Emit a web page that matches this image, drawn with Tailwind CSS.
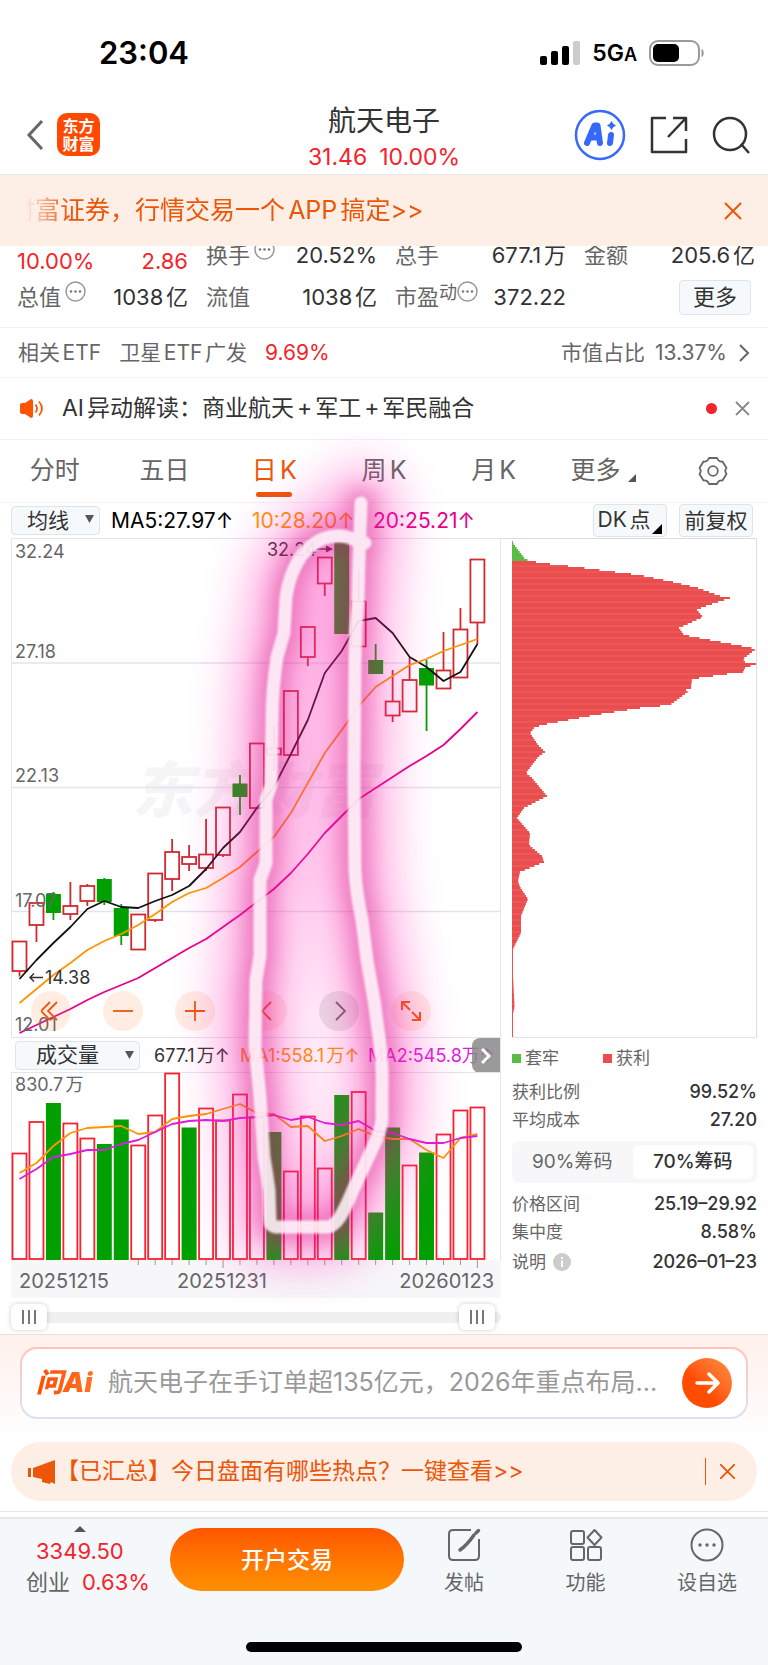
<!DOCTYPE html>
<html lang="zh-CN">
<head>
<meta charset="utf-8">
<meta name="viewport" content="width=device-width, initial-scale=1">
<title>航天电子</title>
<script src="https://cdn.jsdelivr.net/npm/@tailwindcss/browser@4"></script>
</head>
<body class="bg-white font-[Inter,'Noto_Sans_CJK_SC',sans-serif] text-[#333] [text-autospace:normal]">

<!-- Status bar -->
<div class="flex h-[88px] items-center justify-between pt-[18px] pr-[63px] pl-[99px]">
  <div class="text-[31px] leading-9 font-semibold text-black">23:04</div>
  <div class="flex items-center gap-3">
    <svg class="h-6 w-10" viewBox="0 0 40 24" fill="#000"><rect x="0" y="15" width="7" height="9" rx="2"/><rect x="11" y="10" width="7" height="14" rx="2"/><rect x="22" y="5" width="7" height="19" rx="2"/><rect x="33" y="0" width="7" height="24" rx="2" fill="#ccc"/></svg>
    <div class="text-[23px] leading-7 font-semibold text-black">5G<span class="text-lg leading-5">A</span></div>
    <svg class="h-[26px] w-[56px]" viewBox="0 0 56 26"><rect x="1" y="1" width="49" height="24" rx="8" fill="none" stroke="#9a9a9a" stroke-width="2"/><rect x="4" y="4" width="26" height="18" rx="5"/><path d="M52.500 9c3 1 3 7 0 8z" fill="#9a9a9a"/></svg>
  </div>
</div>

<!-- Title bar -->
<header class="grid h-[87px] grid-cols-[1fr_auto_1fr] items-center border-b border-[#e6e6e6] px-[18px] pt-[7px]">
  <div class="flex items-center gap-[13px]">
    <button type="button" aria-label="返回" class="pl-2"><svg class="h-8 w-[18px]" viewBox="0 0 18 32" fill="none" stroke="#666" stroke-width="3"><path d="M16 2 3 16l13 14"/></svg></button>
    <a href="#" class="flex size-[43px] flex-col items-center justify-center rounded-[10px] bg-[#ff4800] text-[16px] leading-[18px] font-bold text-white"><span>东方</span><span>财富</span></a>
  </div>
  <div class="pt-1 text-center">
    <h1 class="text-[28px] leading-10">航天电子</h1>
    <div class="flex justify-center gap-3 text-[23px] leading-8 text-[#f5232b]"><span>31.46</span><span>10.00%</span></div>
  </div>
  <div class="flex items-center justify-end gap-6">
    <button type="button" aria-label="AI"><svg class="size-[52px]" viewBox="0 0 52 52"><circle cx="26" cy="26" r="24" fill="#fff" stroke="#3668fb" stroke-width="2.500"/><g fill="none" stroke="#3668fb" stroke-linejoin="round" stroke-linecap="round"><path d="M13 34 20.500 16.500h3L26 34M17 28.500h8" stroke-width="6"/><path d="M37 26 36 34" stroke-width="6"/></g><path d="m37.500 12 1.800 2.700 2.700 1.800-2.700 1.800-1.800 2.700-1.800-2.700-2.700-1.800 2.700-1.800z" fill="#3668fb"/></svg></button>
    <button type="button" aria-label="分享"><svg class="size-[38px]" viewBox="0 0 38 38" fill="none" stroke="#333" stroke-width="2.500" stroke-linejoin="round"><path d="M16 2H2v34h34V23M23 2h13v13M36 2 18 21"/></svg></button>
    <button type="button" aria-label="搜索"><svg class="size-[38px]" viewBox="0 0 38 38" fill="none" stroke="#333" stroke-width="2.500"><circle cx="18" cy="18" r="16"/><path d="m29 28 8 9"/></svg></button>
  </div>
</header>

<!-- Broker promotion -->
<div class="flex h-[71px] items-center justify-between bg-[#fdeee6] pr-[26px] pl-[26px] text-2xl text-[#ec5609]">
  <a href="#" class="flex h-9 items-center overflow-hidden whitespace-nowrap [mask-image:linear-gradient(to_right,transparent,#000_42px)]"><span class="-ml-4 text-[25px]">财富证券，行情交易一个APP搞定&gt;&gt;</span></a>
  <button type="button" aria-label="关闭"><svg class="size-[18px]" viewBox="0 0 18 18" stroke="#ec5609" stroke-width="2"><path d="m1 1 16 16M17 1 1 17"/></svg></button>
</div>

<!-- Key figures -->
<section class="overflow-hidden border-b border-[#f2f2f4]">
  <div class="-mt-3 grid grid-cols-4 gap-x-[18px] pr-[13px] pb-[9px] pl-[17px] text-[22px] whitespace-nowrap *:flex *:h-[42px] *:items-center *:justify-between">
    <div class="pt-3 text-[#f5232b]"><span>10.00%</span><span>2.86</span></div>
    <div><span class="flex gap-1 text-[#666]">换手<svg class="size-[21px]" viewBox="0 0 21 21"><circle cx="10.500" cy="10.500" r="9.500" fill="none" stroke="#999" stroke-width="1.500"/><g fill="#777"><circle cx="6" cy="10.500" r="1.300"/><circle cx="10.500" cy="10.500" r="1.300"/><circle cx="15" cy="10.500" r="1.300"/></g></svg></span><span>20.52%</span></div>
    <div><span class="text-[#666]">总手</span><span>677.1万</span></div>
    <div><span class="text-[#666]">金额</span><span>205.6亿</span></div>
    <div><span class="flex gap-1 text-[#666]">总值<svg class="size-[21px]" viewBox="0 0 21 21"><circle cx="10.500" cy="10.500" r="9.500" fill="none" stroke="#999" stroke-width="1.500"/><g fill="#777"><circle cx="6" cy="10.500" r="1.300"/><circle cx="10.500" cy="10.500" r="1.300"/><circle cx="15" cy="10.500" r="1.300"/></g></svg></span><span>1038亿</span></div>
    <div><span class="text-[#666]">流值</span><span>1038亿</span></div>
    <div><span class="flex text-[#666]">市盈<span class="text-[18px] leading-6">动</span><svg class="size-[21px]" viewBox="0 0 21 21"><circle cx="10.500" cy="10.500" r="9.500" fill="none" stroke="#999" stroke-width="1.500"/><g fill="#777"><circle cx="6" cy="10.500" r="1.300"/><circle cx="10.500" cy="10.500" r="1.300"/><circle cx="15" cy="10.500" r="1.300"/></g></svg></span><span>372.22</span></div>
    <div><button type="button" class="mr-1 ml-auto h-[35px] w-[72px] rounded border border-[#dfe4e8] bg-[#f5f9fb] leading-8">更多</button></div>
  </div>
</section>

<a href="#" class="flex h-[50px] items-center border-b border-[#f2f2f4] px-[18px] text-[21px] text-[#666]">
  <span>相关ETF</span><span class="ml-[18px]">卫星ETF广发</span><span class="ml-[18px] text-[#f5232b]">9.69%</span>
  <span class="ml-auto">市值占比</span><span class="ml-[10px]">13.37%</span>
  <svg class="ml-3 h-[18px] w-[11px]" viewBox="0 0 11 18" fill="none" stroke="#666" stroke-width="2"><path d="m1 1 8 8-8 8"/></svg>
</a>

<div class="flex h-[62px] items-center border-b border-[#f2f2f4] pr-[18px] pl-5 text-[22px]">
  <svg class="h-[19px] w-6" viewBox="0 0 24 19"><path d="M0 6q0-2 2-2h3l6-4q2 0 2 2v15q0 2-2 2l-6-4H2q-2 0-2-2z" fill="#ff5500"/><path d="M15.500 5.500q3 4 0 8M19 2.500q6 7 0 14" fill="none" stroke="#ff5500" stroke-width="1.800"/></svg>
  <a href="#" class="ml-[18px] text-[23px]">AI异动解读：商业航天<span class="mx-[3px]">+</span>军工<span class="mx-[3px]">+</span>军民融合</a>
  <span class="mr-[18px] ml-auto size-[11px] rounded-full bg-[#f5232b]"></span>
  <button type="button" aria-label="关闭"><svg class="size-[15px]" viewBox="0 0 15 15" stroke="#888" stroke-width="1.800"><path d="m1 1 13 13M14 1 1 14"/></svg></button>
</div>

<main class="relative">
  <!-- Period tabs -->
  <nav class="grid h-[63px] grid-cols-7 place-items-center border-b border-[#f2f2f4] text-[25px] text-[#666]">
    <button type="button">分时</button>
    <button type="button">五日</button>
    <button type="button" class="relative text-[#ec5609]">日K<span class="absolute bottom-[-7px] left-1/2 h-[5px] w-9 -translate-x-1/2 rounded-full bg-[#ec5609]"></span></button>
    <button type="button">周K</button>
    <button type="button">月K</button>
    <button type="button" class="flex items-end gap-2">更多<svg class="mb-2 size-2" viewBox="0 0 8 8" fill="#555"><path d="M8 0v8H0z"/></svg></button>
    <button type="button" aria-label="设置"><svg class="size-[30px]" viewBox="0 0 30 30" fill="none" stroke="#666" stroke-width="1.800" stroke-linejoin="round"><path d="M11 2h8q1.500 4 5.500 3.500L28.500 12q-2.500 3 0 6l-4 6.500Q20.500 24 19 28h-8q-1.500-4-5.500-3.500L1.500 18q2.500-3 0-6l4-6.500Q9.500 6 11 2z"/><circle cx="15" cy="15" r="4.800"/></svg></button>
  </nav>

  <!-- Moving averages -->
  <div class="flex h-[35px] items-center pr-[15px] pl-[11px] text-[21px] whitespace-nowrap">
    <div class="relative"><select aria-label="均线" class="h-[29px] w-[89px] appearance-none rounded border border-[#dfe4e8] bg-[#f5f9fb] pl-[15px] leading-6"><option>均线</option></select><svg class="pointer-events-none absolute top-[10px] right-[6px] h-2 w-[9px]" viewBox="0 0 9 8" fill="#555"><path d="M0 0h9L4.500 8z"/></svg></div>
    <span class="ml-[11px] w-[141px] text-black">MA5:27.97↑</span>
    <span class="w-[121px] text-[#ff9500]">10:28.20↑</span>
    <span class="text-[#e6008c]">20:25.21↑</span>
    <button type="button" class="ml-auto flex h-[33px] w-[74px] items-end justify-center rounded border border-[#dfe4e8] bg-[#f5f9fb] leading-8">DK点<svg class="mb-[2px] ml-[2px] size-[10px]" viewBox="0 0 10 10"><path d="M10 0v10H0z"/></svg></button>
    <button type="button" class="ml-3 h-[33px] w-[74px] rounded border border-[#dfe4e8] bg-[#f5f9fb] leading-8">前复权</button>
  </div>

  <div class="grid grid-cols-[490fr_256fr] px-[11px]">
    <div>
      <div class="relative">
        <svg id="kline" class="block h-auto w-full font-[Inter,'Noto_Sans_CJK_SC',sans-serif]" viewBox="11 538 490 499"></svg>
        <div class="absolute bottom-[6px] left-5 flex gap-8 *:flex *:size-10 *:items-center *:justify-center *:rounded-full *:bg-[#ff6a1a]/12">
          <button type="button" aria-label="最早"><svg class="size-5" viewBox="0 0 20 20" fill="none" stroke="#f0560c" stroke-width="1.800"><path d="M9 1 0 10l9 9M16 1l-9 9 9 9"/></svg></button>
          <button type="button" aria-label="缩小"><svg class="size-5" viewBox="0 0 20 20" stroke="#f0560c" stroke-width="1.800"><path d="M0 10h20"/></svg></button>
          <button type="button" aria-label="放大"><svg class="size-5" viewBox="0 0 20 20" stroke="#f0560c" stroke-width="1.800"><path d="M0 10h20M10 0v20"/></svg></button>
          <button type="button" aria-label="向前"><svg class="size-5" viewBox="0 0 20 20" fill="none" stroke="#f0560c" stroke-width="1.800"><path d="m14 1-9 9 9 9"/></svg></button>
          <button type="button" aria-label="向后" class="!bg-[#888]/20"><svg class="size-5" viewBox="0 0 20 20" fill="none" stroke="#666" stroke-width="1.800"><path d="m7 1 9 9-9 9"/></svg></button>
          <button type="button" aria-label="全屏"><svg class="size-5" viewBox="0 0 20 20" fill="none" stroke="#f0560c" stroke-width="2"><path d="M1 9V1h8M1 1l8 8M19 11v8h-8M19 19l-8-8"/></svg></button>
        </div>
      </div>
      <!-- Volume header -->
      <div class="relative flex h-[35px] items-center overflow-hidden border-t border-r border-[#e4e4ea] pl-1 text-[18px] whitespace-nowrap">
        <div class="relative"><select aria-label="成交量" class="h-[29px] w-[125px] appearance-none rounded border border-[#dfe4e8] bg-[#f5f9fb] pl-[20px] text-[21px] leading-6"><option>成交量</option></select><svg class="pointer-events-none absolute top-[10px] right-[6px] h-2 w-[9px]" viewBox="0 0 9 8" fill="#555"><path d="M0 0h9L4.500 8z"/></svg></div>
        <span class="ml-[14px] w-[86px]">677.1万↑</span>
        <span class="w-[128px] text-[#ff9500]">MA1:558.1万↑</span>
        <span class="text-[#dd1cdd] [text-autospace:no-autospace]">MA2:545.8万↑</span>
        <button type="button" aria-label="更多指标" class="absolute top-0 right-0 flex h-[35px] w-7 items-center justify-center rounded-l-lg bg-[#888]/85"><svg class="h-4 w-[10px]" viewBox="0 0 10 16" fill="none" stroke="#fff" stroke-width="3"><path d="m1 1 7 7-7 7"/></svg></button>
      </div>
      <svg id="volume" class="block h-auto w-full font-[Inter,'Noto_Sans_CJK_SC',sans-serif]" viewBox="11 1072 490 226"></svg>
      <!-- Date range -->
      <div class="relative h-9">
        <div class="absolute inset-x-0 top-[14px] h-[11px] rounded-full bg-[#f0f0f3]"></div>
        <input type="range" aria-label="开始日期" min="0" max="100" value="0" class="pointer-events-none absolute top-[6px] left-0 h-[26px] w-[484px] max-w-full appearance-none bg-transparent [&::-webkit-slider-thumb]:pointer-events-auto [&::-webkit-slider-thumb]:h-[26px] [&::-webkit-slider-thumb]:w-9 [&::-webkit-slider-thumb]:appearance-none [&::-webkit-slider-thumb]:rounded-md [&::-webkit-slider-thumb]:bg-white [&::-webkit-slider-thumb]:bg-[linear-gradient(90deg,#777_2px,transparent_2px,transparent_6px,#777_6px,#777_8px,transparent_8px,transparent_12px,#777_12px)] [&::-webkit-slider-thumb]:bg-[length:14px_14px] [&::-webkit-slider-thumb]:bg-center [&::-webkit-slider-thumb]:bg-no-repeat [&::-webkit-slider-thumb]:shadow-[0_0_5px_rgba(0,0,0,.2)]">
        <input type="range" aria-label="结束日期" min="0" max="100" value="100" class="pointer-events-none absolute top-[6px] left-0 h-[26px] w-[484px] max-w-full appearance-none bg-transparent [&::-webkit-slider-thumb]:pointer-events-auto [&::-webkit-slider-thumb]:h-[26px] [&::-webkit-slider-thumb]:w-9 [&::-webkit-slider-thumb]:appearance-none [&::-webkit-slider-thumb]:rounded-md [&::-webkit-slider-thumb]:bg-white [&::-webkit-slider-thumb]:bg-[linear-gradient(90deg,#777_2px,transparent_2px,transparent_6px,#777_6px,#777_8px,transparent_8px,transparent_12px,#777_12px)] [&::-webkit-slider-thumb]:bg-[length:14px_14px] [&::-webkit-slider-thumb]:bg-center [&::-webkit-slider-thumb]:bg-no-repeat [&::-webkit-slider-thumb]:shadow-[0_0_5px_rgba(0,0,0,.2)]">
      </div>
    </div>

    <!-- Cost distribution -->
    <div>
      <svg id="chips" class="block h-auto w-full" viewBox="501 538 256 499"></svg>
      <div class="pl-[11px] text-[17px] leading-7 text-[#666]">
        <div class="flex h-[41px] items-center border-t border-[#e4e4ea]">
          <span class="mr-1 size-[9px] bg-[#5cba47]"></span><span class="w-[78px]">套牢</span><span class="mr-1 size-[9px] bg-[#ea4d4d]"></span><span>获利</span>
        </div>
        <div class="flex justify-between"><span>获利比例</span><span class="text-[18px] font-medium text-[#333]">99.52%</span></div>
        <div class="flex justify-between"><span>平均成本</span><span class="text-[18px] font-medium text-[#333]">27.20</span></div>
        <div class="my-[7px] flex h-[42px] rounded-lg bg-[#f7f7fa] p-1 pl-0 text-[19px] [text-autospace:no-autospace]">
          <button type="button" class="flex-1">90%筹码</button><button type="button" class="flex-1 rounded-md bg-white font-medium text-[#333]">70%筹码</button>
        </div>
        <div class="flex justify-between"><span>价格区间</span><span class="text-[18px] font-medium text-[#333]">25.19–29.92</span></div>
        <div class="flex justify-between"><span>集中度</span><span class="text-[18px] font-medium text-[#333]">8.58%</span></div>
        <div class="mt-[2px] flex justify-between"><span class="flex items-center gap-[7px]">说明<svg class="size-[18px]" viewBox="0 0 18 18"><circle cx="9" cy="9" r="9" fill="#ccc"/><path d="M9 7.500V14M9 4v2" stroke="#fff" stroke-width="2"/></svg></span><span class="text-[18px] font-medium text-[#333]">2026–01–23</span></div>
      </div>
    </div>
  </div>

  <!-- Hand-drawn marker over the chart -->
  <svg class="pointer-events-none absolute top-0 left-0 w-full overflow-visible" viewBox="0 440 768 895" fill="none" stroke-linecap="round" stroke-linejoin="round">
    <defs>
      <filter id="wide" filterUnits="userSpaceOnUse" x="100" y="380" width="450" height="980"><feGaussianBlur stdDeviation="23"/></filter>
      <filter id="near" filterUnits="userSpaceOnUse" x="100" y="380" width="450" height="980"><feGaussianBlur stdDeviation="10"/></filter>
      <filter id="soft" filterUnits="userSpaceOnUse" x="100" y="380" width="450" height="980"><feGaussianBlur stdDeviation="1"/></filter>
      <path id="mark" d="M361 503 359 560 358 600Q355 630 355 660L354 780 355 870Q356 892 362 920L367 960 374 1000 379 1037Q383 1065 382 1090L382 1120Q380 1133 373 1147L353 1190Q346 1207 340 1217 333 1227 328 1227L276 1227Q270 1226 270 1221L269 1190Q267 1175 264 1157L260 1097 255 1045 256 980 260 956 260 880 266 863 266 800 271 785 272 723Q272 690 277 657L284 633 286 597Q289 575 301 556 310 545 322 539 335 534 347 537L365 543"/>
    </defs>
    <g filter="url(#wide)" opacity=".38"><use href="#mark" stroke="#ff28b4" stroke-width="74"/></g>
    <g filter="url(#near)" opacity=".32"><use href="#mark" stroke="#c8006e" stroke-width="30"/></g>
    <g filter="url(#soft)" opacity=".88"><use href="#mark" stroke="#fff5fb" stroke-width="13"/></g>
  </svg>
</main>

<!-- Ask AI -->
<section class="border-t border-[#e4e4e6] bg-linear-to-b from-[#fff0eb] to-white px-5 pt-3 pb-[23px]">
  <div class="rounded-[17px] bg-linear-to-b from-[#ffc2b8] to-[#d8e2f6] p-[2px]">
    <form class="flex h-[68px] items-center rounded-[15px] bg-white px-[14px]" onsubmit="return false">
      <label for="ask" class="w-[72px] bg-linear-to-r from-[#ff4c00] to-[#ff7a2a] bg-clip-text text-[27px] leading-9 font-black whitespace-nowrap text-transparent italic [text-autospace:no-autospace]">问Ai</label>
      <input id="ask" type="text" placeholder="航天电子在手订单超135亿元，2026年重点布局..." class="min-w-0 flex-1 text-[25px] outline-none [text-autospace:no-autospace] placeholder:text-[#999]">
      <button type="submit" aria-label="发送" class="flex size-[50px] items-center justify-center rounded-full bg-linear-to-tr from-[#ff4d00] from-40% to-[#ff9040]"><svg class="h-[22px] w-[25px]" viewBox="0 0 25 22" fill="none" stroke="#fff" stroke-width="3.500" stroke-linecap="round" stroke-linejoin="round"><path d="M2 11h20M14 2l9 9-9 9"/></svg></button>
    </form>
  </div>
</section>

<div class="mx-[11px] flex h-[59px] items-center rounded-full bg-[#fdeee6] pr-[22px] pl-[17px] text-[23px] text-[#ec5609]">
  <svg class="h-6 w-7" viewBox="0 0 28 24" fill="#ec5609"><path d="M0 8h3v9H0zM5 8 27 0v24l-4-2-1 2-8-2v-3l-9-2z"/></svg>
  <a href="#" class="whitespace-nowrap">【已汇总】今日盘面有哪些热点？一键查看&gt;&gt;</a>
  <span class="mr-[14px] ml-auto h-[27px] w-px bg-[#ec5609]"></span>
  <button type="button" aria-label="关闭"><svg class="size-[15px]" viewBox="0 0 15 15" stroke="#ec5609" stroke-width="1.800"><path d="m0 0 15 15M15 0 0 15"/></svg></button>
</div>
<div class="mt-[10px] h-[6px] border-t border-[#e8e8ea]"></div>

<!-- Bottom bar -->
<footer class="border-t-2 border-[#e6e9eb] bg-[#f5f8fa]">
  <div class="flex h-[82px] items-start pr-[30px] pl-[26px] text-[20px] leading-7 text-[#666]">
    <a href="#" class="w-[144px] pt-[7px] text-[22px] leading-[31px]">
      <svg class="ml-[48px] block h-[6px] w-3" viewBox="0 0 12 6" fill="#555"><path d="M6 0l6 6H0z"/></svg>
      <span class="mt-1 block pl-[10px] text-[#f5232b]">3349.50</span>
      <span class="flex gap-3">创业<span class="text-[#f5232b]">0.63%</span></span>
    </a>
    <button type="button" class="mt-[9px] h-[63px] w-[234px] rounded-full bg-linear-to-b from-[#ff5500] to-[#ff9000] text-[23px] font-medium text-white">开户交易</button>
    <div class="flex flex-1 justify-between pt-[9px] pl-[29px] *:flex *:w-[62px] *:flex-col *:items-center *:gap-[7px] *:whitespace-nowrap">
      <button type="button"><svg class="size-[34px]" viewBox="0 0 34 34" fill="none" stroke="#666" stroke-width="2"><path d="M24 2H6Q2 2 2 6v22q0 4 4 4h22q4 0 4-4V11"/><path d="M13 22q7-5 14-15M29 5l2.500-2.500" stroke-width="3.500" stroke-linecap="round"/></svg>发帖</button>
      <button type="button"><svg class="size-[34px]" viewBox="0 0 34 34" fill="none" stroke="#666" stroke-width="2" stroke-linejoin="round"><rect x="2" y="3" width="13" height="13" rx="2"/><rect x="2" y="19" width="13" height="13" rx="2"/><rect x="19" y="19" width="13" height="13" rx="2"/><path d="m25.500 2 7 7.500-7 7.500-7-7.500z"/></svg>功能</button>
      <button type="button"><svg class="size-[34px]" viewBox="0 0 34 34"><circle cx="17" cy="17" r="15.500" fill="none" stroke="#666" stroke-width="2"/><g fill="#666"><circle cx="10" cy="17" r="1.700"/><circle cx="17" cy="17" r="1.700"/><circle cx="24" cy="17" r="1.700"/></g></svg>设自选</button>
    </div>
  </div>
  <div class="flex h-[65px] items-end justify-center pb-[14px]"><div class="h-[10px] w-[276px] rounded-full bg-black"></div></div>
</footer>

<script>
const cx = i => 19.5 + i * 16.96;
const line = (ys, color) => `<polyline points="${ys.map((y, i) => cx(i).toFixed(1) + ',' + y).join(' ')}" fill="none" stroke="${color}" stroke-width="1.800" stroke-linejoin="round"/>`;
const text = (x, y, s, size, fill, extra = '') => `<text x="${x}" y="${y}" font-size="${size}" fill="${fill}" ${extra}>${s}</text>`;

// Candles: [type, body top, body bottom, high, low]
const candles = [
  ['r',941.5,971,941.5,976.5],['r',903,925,903,942],['g',894,913,892,920],['r',906,914,882,920],['r',886,901,884,906],
  ['g',879,902,878,905],['g',908,936,904,945],['r',914.5,949.5,914.5,949.5],['r',873.5,920,873.5,922],['r',852,879,839,891],
  ['r',857,864,845,871],['r',854.5,868,819,871],['r',807.5,855,807.5,857],['g',783.5,797,775,815],['r',743.5,808,743.5,808],
  ['r',748.5,754.5,726,771],['r',691,755,691,755],['r',627,657,627,666],['r',557.5,583.5,557.5,596],['g',542,634,542,634],
  ['r',601.5,646.5,569,646.5],['g',660,674,644,674],['r',701.5,715.5,670,722],['r',680,711.5,658,711.5],['g',668,685.5,660,731],
  ['r',670.5,688.5,632,688.5],['r',629.5,677.5,608,677.5],['r',559.5,622.5,559.5,644]];
let k = `<g transform="translate(132 812)">${text(0, 0, '东方财富', 61, '#f5f5f6', 'font-weight="900" font-style="italic"')}</g>`;
k += '<path d="M11 663H501M11 787.500H501M11 911.500H501" stroke="#e2e3ee" stroke-width="1.500"/><path d="M11.500 1037V538.500H501" fill="none" stroke="#e4e4ea"/><path d="M500.500 538V1037" stroke="#e4e4ea"/>';
candles.forEach(([t, a, b, h, l], i) => {
  const x = cx(i);
  if (t === 'g') k += `<rect x="${x - 7.5}" y="${a}" width="15" height="${b - a}" fill="#00a000"/><path d="M${x} ${h}V${l}" stroke="#00a000" stroke-width="1.800"/>`;
  else k += `<rect x="${x - 7}" y="${a}" width="14" height="${b - a}" fill="#fff" fill-opacity=".9" stroke="#d02a30" stroke-width="1.800"/><path d="M${x} ${h}V${a}M${x} ${b}V${l}" stroke="#d02a30" stroke-width="1.800"/>`;
});
k += line([979,960,943,927,909,901,907,908,901,895,886,869,848,832,808,787,754,720,673,651,621,618,633,657,667,681,672,644], '#111');
k += line([1003,989,975,963,950,941,934,925,914,902,893,888,878,867,852,837,813,783,753,730,706,687,676,665,659,651,645,639], '#ff9500');
k += line([1033,1025,1017,1009,1000,992,985,978,968,958,948,939,927,915,902,889,873,854,833,816,799,788,777,766,756,745,729,712], '#e6008c');
k += text(15, 558, '32.24', 18, '#666') + text(15, 658, '27.18', 18, '#666') + text(15, 782, '22.13', 18, '#666') + text(15, 907, '17.07', 18, '#666') + text(15, 1031, '12.01', 18, '#666');
k += text(267, 556, '32.24', 18, '#333') + '<path d="M316 549H328" stroke="#333" stroke-width="1.500"/><path d="M326 545.500 333 549 326 552.500z" fill="#333"/>';
k += text(45, 984, '14.38', 18, '#333') + '<path d="M43 977.500H30M34 973.500 30 977.500 34 981.500" fill="none" stroke="#333" stroke-width="1.500"/>';
document.getElementById('kline').innerHTML = k;

// Volume bars: [type, top]
const bars = [['r',1153.5],['r',1122],['g',1103],['r',1123.5],['r',1138.5],['g',1144],['g',1119.5],['r',1145.5],['r',1115.5],['r',1073.5],['g',1127.5],['r',1108.5],['r',1120.5],['r',1094.5],
  ['r',1117.5],['g',1132],['r',1171.5],['r',1116.5],['r',1168.5],['g',1095],['r',1092],['g',1212.5],['g',1127.5],['r',1165.5],['g',1152.5],['r',1134.5],['r',1110.5],['r',1107.5]];
let v = '<rect x="11" y="1260" width="490" height="38" fill="#f7f7fa"/><path d="M11.500 1260V1072.500H501M500.500 1072V1260" fill="none" stroke="#e4e4ea"/>';
bars.forEach(([t, y], i) => {
  const x = cx(i);
  v += t === 'g' ? `<rect x="${x - 7.5}" y="${y}" width="15" height="${1260 - y}" fill="#00a000"/>`
                 : `<rect x="${x - 7}" y="${y}" width="14" height="${1259 - y}" fill="#fff" stroke="#fa2030" stroke-width="1.800"/>`;
  if (i > 6) v += `<path d="M${x} 1260V${i === 12 || i === 27 ? 1268 : 1265}" stroke="#999"/>`;
});
v += line([1173,1163,1146,1133,1128,1127,1126,1134,1132,1119,1116,1114,1109,1104,1113,1114,1127,1126,1141,1136,1129,1136,1139,1139,1150,1158,1138,1134], '#ff9500');
v += line([1179,1169,1157,1154,1150,1150,1144,1140,1132,1124,1121,1120,1121,1118,1117,1115,1120,1117,1123,1125,1121,1131,1133,1139,1143,1143,1138,1136], '#dd1cdd');
v += text(15, 1091, '830.7万', 18, '#666');
v += text(19, 1288, '20251215', 20, '#666') + text(177, 1288, '20251231', 20, '#666') + text(494, 1288, '20260123', 20, '#666', 'text-anchor="end"');
document.getElementById('volume').innerHTML = v;

// Cost distribution outline: [right edge, y]
const edge = [[512,541],[525,558],[530,560],[536,561],[550,563],[577,566],[607,570],[639,574],[673,581],[698,587],[720,595],[730,597],[724,599],[703,606],[697,609],[703,616],[679,627],[684,634],[710,639],[747,646],[756,648],[743,658],[745,661],[756,663],[745,667],[743,671],[727,673],[692,678],[691,687],[683,688],[689,690],[670,704],[640,707],[595,714],[547,723],[535,726],[530,732],[538,744],[545,751],[538,756],[526,772],[532,777],[547,795],[524,807],[517,817],[530,832],[529,844],[542,855],[544,861],[520,871],[518,880],[520,886],[528,898],[521,915],[521,932],[513,948],[513,975],[514.5,1006],[513,1013],[513,1036]];
let c = '<path d="M501 538.500H756.500V1037" fill="none" stroke="#dcdce0"/>', e = 0;
for (let y = 541, n = 0; y < 1036; y += 2, n++) {
  while (e < edge.length - 2 && edge[e + 1][1] <= y) e++;
  const [x0, y0] = edge[e], [x1, y1] = edge[e + 1];
  const x = x0 + (x1 - x0) * (y - y0) / (y1 - y0);
  c += `<rect x="512" y="${y}" width="${Math.max(1, x - 512).toFixed(1)}" height="2" fill="${y < 560 ? '#5cba47' : n % 3 ? '#ea4d4d' : '#ec5858'}"/>`;
}
document.getElementById('chips').innerHTML = c;
</script>
</body>
</html>
